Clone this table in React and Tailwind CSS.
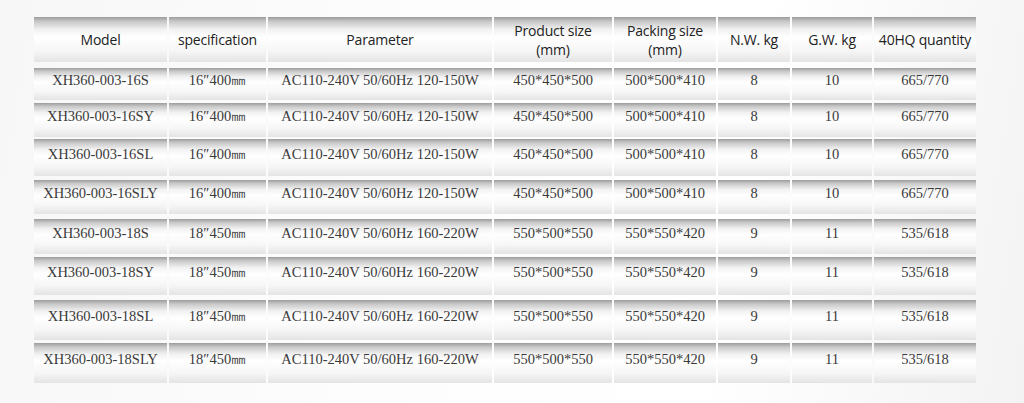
const cols = [
  { label: 'Model', w: 'w-[133px]' },
  { label: 'specification', w: 'w-[97px]' },
  { label: 'Parameter', w: 'w-[224px]' },
  { label: 'Product size\n(mm)', w: 'w-[118px]' },
  { label: 'Packing size\n(mm)', w: 'w-[102px]' },
  { label: 'N.W. kg', w: 'w-[72px]' },
  { label: 'G.W. kg', w: 'w-[80px]' },
  { label: '40HQ quantity', w: 'w-[102px]' },
];

const small = ['16″400㎜', 'AC110-240V 50/60Hz 120-150W', '450*450*500', '500*500*410', '8', '10', '665/770'];
const big = ['18″450㎜', 'AC110-240V 50/60Hz 160-220W', '550*500*550', '550*550*420', '9', '11', '535/618'];

const rows = [
  { cls: 'h-[32px] mt-[6px]', cells: ['XH360-003-16S', ...small] },
  { cls: 'h-[34px] mt-[3px]', cells: ['XH360-003-16SY', ...small] },
  { cls: 'h-[37px] mt-[2px]', cells: ['XH360-003-16SL', ...small] },
  { cls: 'h-[34px] mt-[4px]', cells: ['XH360-003-16SLY', ...small] },
  { cls: 'h-[35px] mt-[5px]', cells: ['XH360-003-18S', ...big] },
  { cls: 'h-[38px] mt-[3px]', cells: ['XH360-003-18SY', ...big] },
  { cls: 'h-[40px] mt-[5px]', cells: ['XH360-003-18SL', ...big] },
  { cls: 'h-[40px] mt-[3px]', cells: ['XH360-003-18SLY', ...big] },
];

const cellBg =
  'bg-[linear-gradient(180deg,#9c9c9c_0%,#c8c8c8_10%,#f2f2f2_28%,#ffffff_45%,#f6f6f6_75%,#e4e4e4_100%)]';

const App = () => {
  return (
    <div className="w-[1024px] h-[403px] overflow-hidden bg-[linear-gradient(100deg,#f7f7f7_0%,#fdfdfd_40%,#ffffff_70%,#f3f3f3_100%)]">
      <div className="pl-[34px] pt-[17px]">
        {/* header */}
        <div className="flex gap-x-[2px] h-[45px]">
          {cols.map((c) => (
            <div
              key={c.label}
              className={`${c.w} ${cellBg} flex items-center justify-center text-center whitespace-pre-line leading-[19px] text-[14px] text-[#222] font-['Open_Sans','Noto_Sans',sans-serif] tracking-[-0.2px]`}
            >
              {c.label}
            </div>
          ))}
        </div>

        {/* body */}
        {rows.map((r, i) => (
          <div key={i} className={`flex gap-x-[2px] ${r.cls}`}>
            {r.cells.map((v, j) => (
              <div
                key={j}
                className={`${cols[j].w} ${cellBg} flex items-center justify-center pb-[6px] text-[14.5px] text-[#3a3a3a] whitespace-pre font-['Liberation_Serif','DejaVu_Serif',serif]`}
              >
                {v}
              </div>
            ))}
          </div>
        ))}
      </div>
    </div>
  );
};

export default App;
